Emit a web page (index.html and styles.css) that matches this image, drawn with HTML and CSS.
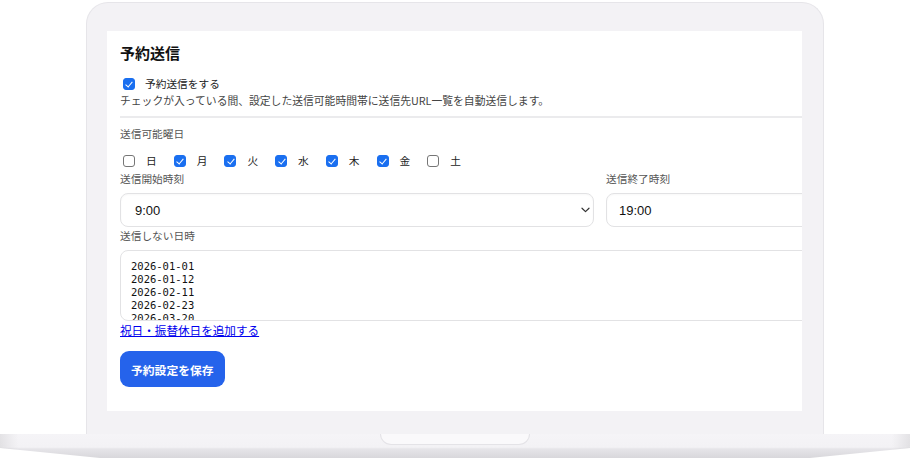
FILE: index.html
```html
<!DOCTYPE html>
<html lang="ja">

<head>
  <meta charset="UTF-8" />
  <meta name="viewport" content="width=device-width, initial-scale=1.0">
  <title>予約送信</title>
  <link rel="stylesheet" href="styles.css">
</head>

<body>
  <div class="laptop">
    <div class="lid">
      <div class="screen">
        <div class="page">
          <h2 class="title">予約送信</h2>

          <label class="check-row">
            <input type="checkbox" class="check" checked>
            <span>予約送信をする</span>
          </label>
          <p class="desc">チェックが入っている間、設定した送信可能時間帯に送信先URL一覧を自動送信します。</p>

          <hr class="divider">

          <div class="field-label">送信可能曜日</div>
          <div class="days">
            <label class="day"><input type="checkbox" class="check"><span>日</span></label>
            <label class="day"><input type="checkbox" class="check" checked><span>月</span></label>
            <label class="day"><input type="checkbox" class="check" checked><span>火</span></label>
            <label class="day"><input type="checkbox" class="check" checked><span>水</span></label>
            <label class="day"><input type="checkbox" class="check" checked><span>木</span></label>
            <label class="day"><input type="checkbox" class="check" checked><span>金</span></label>
            <label class="day"><input type="checkbox" class="check"><span>土</span></label>
          </div>

          <div class="time-grid">
            <div class="time-col">
              <div class="field-label">送信開始時刻</div>
              <div class="select">
                <span>9:00</span>
                <svg width="9" height="6" viewBox="0 0 9 6">
                  <path d="M1 1.2 L4.5 4.6 L8 1.2" fill="none" stroke="#333" stroke-width="1.2" stroke-linecap="round" stroke-linejoin="round" />
                </svg>
              </div>
            </div>
            <div class="time-col">
              <div class="field-label">送信終了時刻</div>
              <input type="text" class="text-input" value="19:00">
            </div>
          </div>

          <div class="field-label">送信しない日時</div>
          <textarea class="dates" rows="5">2026-01-01
2026-01-12
2026-02-11
2026-02-23
2026-03-20
2026-04-29</textarea>
          <a href="#" class="holiday-link">祝日・振替休日を追加する</a>

          <button class="save-button">予約設定を保存</button>
        </div>
      </div>
    </div>
    <div class="base">
      <div class="notch"></div>
    </div>
  </div>
</body>

</html>
```

FILE: styles.css
```css
body {
  margin: 0;
  padding: 0;
  width: 910px;
  height: 458px;
  overflow: hidden;
  background-color: #fff;
  font-family: 'Noto Sans CJK JP', 'Liberation Sans', sans-serif;
  color: #222;
}

.laptop {
  display: flex;
  flex-direction: column;
  height: 458px;
}

.lid {
  margin: 2px 86px 0 86px;
  height: 432px;
  box-sizing: border-box;
  padding: 28px 21px 24px 20px;
  background-color: #f3f2f5;
  border: 1px solid #e6e5e9;
  border-bottom: none;
  border-radius: 22px 22px 0 0;
}

.screen {
  height: 380px;
  background-color: #fff;
  overflow: hidden;
}

.page {
  width: 960px;
  padding: 13px 13px 0 13px;
}

.title {
  margin: 0;
  font-size: 15px;
  line-height: 18px;
  font-weight: 700;
  color: #111;
}

.check-row {
  display: flex;
  align-items: center;
  gap: 10px;
  margin-top: 14px;
  font-size: 10.7px;
  line-height: 16px;
  color: #222;
}

.check {
  appearance: none;
  -webkit-appearance: none;
  position: relative;
  width: 12px;
  height: 12px;
  margin: 0 0 0 3px;
  box-sizing: border-box;
  border: 1px solid #767676;
  border-radius: 3px;
  background-color: #fff;
  flex-shrink: 0;
}

.check:checked {
  background-color: #1a6ff0;
  border-color: #1a6ff0;
}

.check:checked::after {
  content: '';
  position: absolute;
  left: 3.4px;
  top: 0.8px;
  width: 2.6px;
  height: 6px;
  border: solid #fff;
  border-width: 0 1.7px 1.7px 0;
  transform: rotate(40deg);
}

.desc {
  margin: 1px 0 0 0;
  font-size: 10.8px;
  line-height: 14px;
  color: #444;
}

.divider {
  margin: 9px -13px 0 0;
  border: none;
  border-top: 2px solid #ebebed;
}

.field-label {
  font-size: 10.7px;
  line-height: 14px;
  color: #555;
}

.divider + .field-label {
  margin-top: 9px;
}

.days {
  display: flex;
  margin-top: 13px;
  margin-bottom: 4px;
}

.day {
  display: flex;
  align-items: center;
  gap: 11px;
  margin-right: 14px;
  font-size: 10.7px;
  line-height: 14px;
  color: #222;
}

.time-grid {
  display: grid;
  grid-template-columns: 1fr 1fr;
  gap: 12px;
}

.select,
.text-input {
  margin-top: 7px;
  height: 34px;
  box-sizing: border-box;
  border: 1px solid #e2e2e4;
  border-radius: 8px;
  background-color: #fff;
  box-shadow: inset 0 1px 2px rgba(0, 0, 0, 0.03);
  font-family: 'Liberation Sans', 'Noto Sans CJK JP', sans-serif;
  font-size: 13px;
  color: #111;
}

.select {
  display: flex;
  align-items: center;
  justify-content: space-between;
  padding: 0 3px 0 14px;
}

.text-input {
  width: 100%;
  padding: 0 12px;
  display: block;
}

.time-grid + .field-label {
  margin-top: 2px;
}

.dates {
  display: block;
  width: 100%;
  height: 71px;
  margin-top: 7px;
  box-sizing: border-box;
  padding: 9px 10px 0 10px;
  border: 1px solid #e2e2e4;
  border-radius: 8px;
  font-family: 'DejaVu Sans Mono', 'Liberation Mono', monospace;
  font-size: 10.5px;
  line-height: 13px;
  color: #111;
  resize: none;
  overflow: hidden;
}

.holiday-link {
  display: block;
  width: fit-content;
  margin-top: 2px;
  font-size: 11.6px;
  line-height: 15px;
  color: #0000ee;
  text-decoration: underline;
}

.save-button {
  display: block;
  margin-top: 13px;
  height: 36px;
  padding: 0 11px;
  border: none;
  border-radius: 9px;
  background-color: #2563eb;
  color: #fff;
  font-family: 'Noto Sans CJK JP', sans-serif;
  font-size: 11.8px;
  font-weight: 700;
}

.base {
  position: relative;
  height: 24px;
  background: linear-gradient(to bottom, #f5f4f7 0%, #f3f2f5 55%, #e6e5e9 62%, #d8d7db 100%);
  clip-path: polygon(0 0, 100% 0, 100% 58%, 89% 100%, 11% 100%, 0 58%);
}

.base::before {
  content: '';
  position: absolute;
  inset: 0;
  background: linear-gradient(to right, rgba(0, 0, 0, 0.07) 0, rgba(0, 0, 0, 0) 2%, rgba(0, 0, 0, 0) 98%, rgba(0, 0, 0, 0.07) 100%);
}

.notch {
  position: absolute;
  left: 380px;
  top: 0;
  width: 150px;
  height: 11px;
  box-sizing: border-box;
  background-color: #faf9fb;
  border: 1px solid #e4e3e7;
  border-top: none;
  border-radius: 0 0 12px 12px;
}
```
